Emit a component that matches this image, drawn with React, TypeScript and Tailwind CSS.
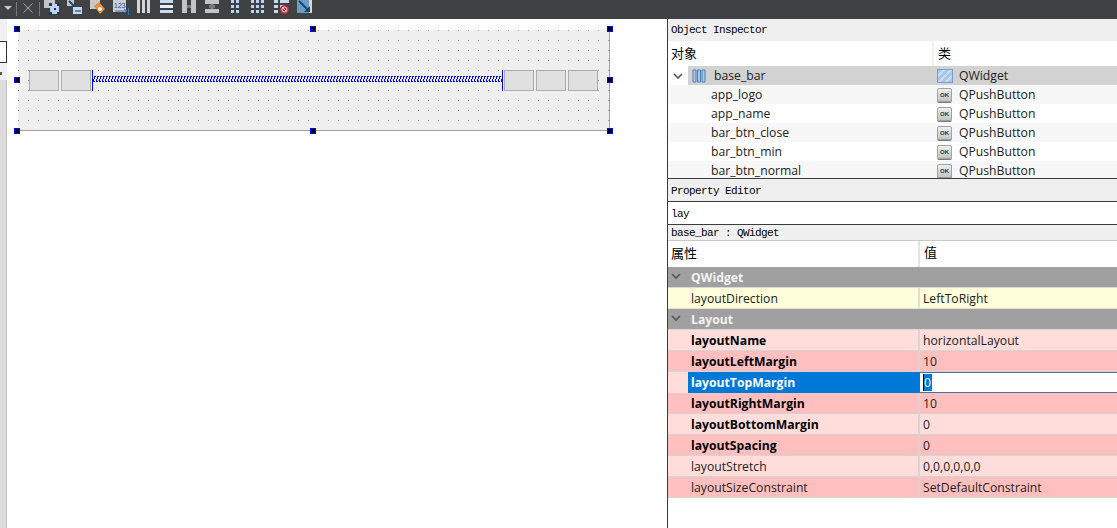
import type { ReactNode } from 'react';

const mono = "font-['Liberation_Mono','Noto_Sans_CJK_SC',monospace] text-[11px] tracking-[-0.6px]";

// toolbar glyphs, 16px box each, painted in designer's pale blue/white
const ToolIcon = ({ children }: { children: ReactNode }) => (
  <svg width="16" height="16" viewBox="0 0 16 16" className="shrink-0 blur-[0.4px]">
    {children}
  </svg>
);

const Toolbar = () => (
  <div className="flex h-[19px] items-center bg-[#404142] pl-[4px]">
    <svg width="8" height="4" viewBox="0 0 8 4" className="-mt-[3px]">
      <path d="M0 0h8L4 4z" fill="#c8c8c8" />
    </svg>
    <div className="ml-[4px] -mt-[2px] h-[14px] w-px bg-[#77787a]" />
    <svg width="10" height="10" viewBox="0 0 10 10" className="ml-[6px] -mt-[3px]">
      <path d="M0.500 0.500l9 9M9.500 0.500l-9 9" stroke="#a8a9aa" strokeWidth="1" />
    </svg>
    <div className="ml-[6px] -mt-[2px] h-[14px] w-px bg-[#77787a]" />
    <div className="ml-[4px] flex items-start gap-[7px] self-start">
      <ToolIcon>
        <rect x="0" y="0" width="11" height="8" fill="#c4c4c4" />
        <rect x="6" y="4" width="9" height="10" fill="#b9d3f0" />
        <path d="M5 3h3v3H5zM13 3h3v3h-3zM5 12h3v3H5zM13 12h3v3h-3z" fill="#22395c" />
        <rect x="10" y="8" width="2" height="2" fill="#24364f" />
      </ToolIcon>
      <ToolIcon>
        <rect x="0" y="0" width="7" height="6" fill="#c8c8c8" />
        <path d="M2 1l7 7" stroke="#17496e" strokeWidth="2" />
        <rect x="6" y="7" width="9" height="7" fill="#c2d8ee" />
        <path d="M8 11h6" stroke="#44678c" strokeWidth="1.500" />
      </ToolIcon>
      <ToolIcon>
        <rect x="0" y="0" width="10" height="9" fill="#c8c8c8" />
        <path d="M4 6l5-4 6 7-5 5z" fill="#ee8a3c" />
        <circle cx="10" cy="9" r="2" fill="#fff" />
      </ToolIcon>
      <ToolIcon>
        <rect x="0" y="0" width="13" height="12" fill="#c9cfd8" />
        <text x="1" y="8" fontSize="7" fill="#2c4f86" fontFamily="Liberation Sans">123</text>
        <path d="M2 11h11M11 9l3 2-3 2" stroke="#3873b8" fill="none" />
        <path d="M15.500 8v7" stroke="#3873b8" />
      </ToolIcon>
      <ToolIcon>
        <rect x="1" y="0" width="3" height="13" fill="#d6d6d6" />
        <rect x="6" y="0" width="3" height="13" fill="#d6d6d6" />
        <rect x="11" y="0" width="3" height="13" fill="#d6d6d6" />
      </ToolIcon>
      <ToolIcon>
        <rect x="1" y="0" width="13" height="3" fill="#c6dbf0" />
        <rect x="1" y="5" width="13" height="3" fill="#e4eef8" />
        <rect x="1" y="10" width="13" height="3" fill="#c6dbf0" />
      </ToolIcon>
      <ToolIcon>
        <rect x="0" y="0" width="5" height="13" fill="#c4c4c4" />
        <rect x="9" y="0" width="5" height="13" fill="#c4c4c4" />
        <path d="M5 6.500h4" stroke="#7a7a7a" strokeWidth="3" />
      </ToolIcon>
      <ToolIcon>
        <rect x="0" y="0" width="14" height="4" fill="#c4c4c4" />
        <rect x="0" y="9" width="14" height="4" fill="#c4c4c4" />
        <path d="M7 4v5M4 6.500h6" stroke="#7a7a7a" strokeWidth="3" />
      </ToolIcon>
      <ToolIcon>
        <path d="M3 0h3v3H3zM8 0h3v3H8zM3 5h3v3H3zM8 5h3v3H8zM3 10h3v3H3zM8 10h3v3H8z" fill="#b9d3f0" />
      </ToolIcon>
      <ToolIcon>
        <path d="M0 0h3v3H0zM5 0h3v3H5zM10 0h3v3h-3zM0 5h3v3H0zM5 5h3v3H5zM10 5h3v3h-3zM0 10h3v3H0zM5 10h3v3H5zM10 10h3v3h-3z" fill="#b9d3f0" />
      </ToolIcon>
      <ToolIcon>
        <path d="M0 0h4v3H0zM6 0h9v3H6zM0 5h4v3H0zM6 5h4v3H6zM0 10h4v3H0z" fill="#c6dbf0" />
        <circle cx="10.500" cy="9.500" r="4.500" fill="#b5333a" />
        <circle cx="10.500" cy="9.500" r="2.500" fill="none" stroke="#eec8c8" />
        <path d="M8.500 7.500l4 4" stroke="#eec8c8" />
      </ToolIcon>
      <ToolIcon>
        <rect x="0" y="0" width="15" height="13" fill="#6f9cc6" />
        <rect x="12" y="0" width="3" height="13" fill="#d8d8d8" />
        <path d="M2 1l9 9" stroke="#10486f" strokeWidth="2" />
        <path d="M7 12h6V6z" fill="#10486f" />
      </ToolIcon>
    </div>
  </div>
);

const Handle = ({ className }: { className: string }) => (
  <div className={`absolute h-[6px] w-[6px] border border-[#0000ff] bg-black ${className}`} />
);

const Slot = () => <div className="h-[21px] w-[30px] border border-[#adadad] bg-[#e0e0e0]" />;

const Spring = () => (
  <div className="flex h-[21px] min-w-0 flex-1 items-center border-x border-[#0000ff]">
    <svg className="-mt-[2px] h-[6px] w-full" shapeRendering="crispEdges">
      <defs>
        <pattern id="spring" width="3" height="6" patternUnits="userSpaceOnUse">
          <path d="M1 0h2v1h-1v2h-1zM0 3h1v2h1v1h-2z" fill="#0000ff" />
        </pattern>
      </defs>
      <rect width="100%" height="100%" fill="url(#spring)" />
    </svg>
  </div>
);

const FormCanvas = () => (
  <div className="min-w-0 flex-1 bg-white pl-[11px] pt-[11px]">
    <div className="relative flex h-[101px] w-[592px] items-center border-b border-r border-[#a0a0a0] bg-[#efefef] bg-[conic-gradient(at_1px_1px,transparent_75%,#9a9a9a_0)] bg-[size:10px_10px] px-[11px]">
      <div className="mr-px flex gap-[2px]">
        <Slot />
        <Slot />
      </div>
      <Spring />
      <div className="ml-px flex gap-[2px]">
        <Slot />
        <Slot />
        <Slot />
      </div>
      <Handle className="left-[-4px] top-[-4px]" />
      <Handle className="left-[292px] top-[-4px]" />
      <Handle className="right-[-4px] top-[-4px]" />
      <Handle className="left-[-4px] top-[47px]" />
      <Handle className="right-[-4px] top-[47px]" />
      <Handle className="bottom-[-4px] left-[-4px]" />
      <Handle className="bottom-[-4px] left-[292px]" />
      <Handle className="bottom-[-4px] right-[-4px]" />
    </div>
  </div>
);

const Chevron = ({ color, className }: { color: string; className?: string }) => (
  <svg width="10" height="6" viewBox="0 0 10 6" className={className}>
    <path d="M1 1l4 4 4-4" fill="none" stroke={color} strokeWidth="1.600" />
  </svg>
);

const OkIcon = () => (
  <div className="flex h-[14px] w-[15px] shrink-0 items-center justify-center rounded-[2px] border border-[#a0a0a0] bg-gradient-to-b from-[#f0f0f0] to-[#c4c4c4] font-['Liberation_Sans',sans-serif] text-[6px] font-bold leading-none text-[#333] shadow-[0_1px_0_#7a7a7a]">
    OK
  </div>
);

const objects = ['app_logo', 'app_name', 'bar_btn_close', 'bar_btn_min', 'bar_btn_normal'];

const ObjectInspector = () => (
  <div className="h-[160px] shrink-0 overflow-hidden border-b border-[#3c3c3c]">
    <div className={`flex h-[22px] items-center bg-[#efefef] pl-[3px] text-black ${mono}`}>Object Inspector</div>
    <div className="flex h-[25px] items-center bg-white text-[13px] text-black">
      <div className="w-[266px] border-r-2 border-[#f0f0f0] pl-[3px] leading-[25px]">对象</div>
      <div className="pl-[4px] leading-[25px]">类</div>
    </div>
    <div className="flex h-[19px] items-center">
      <div className="w-[20px] pl-[5px]">
        <Chevron color="#555" />
      </div>
      <div className="flex h-full w-[246px] items-center bg-[#d2d2d2] pl-[4px]">
        <svg width="14" height="14" viewBox="0 0 14 14">
          <path d="M1 1h3v12H1zM5.500 1h3v12h-3zM10 1h3v12h-3z" fill="#a9c8e8" stroke="#4a7fb8" strokeWidth="1" />
        </svg>
        <span className="ml-[8px] mt-[2px]">base_bar</span>
      </div>
      <div className="flex h-full flex-1 items-center bg-[#d2d2d2] pl-[3px]">
        <div className="h-[14px] w-[16px] border border-[#6d9fd4] bg-[repeating-linear-gradient(135deg,#a9c8e8_0,#a9c8e8_3px,#c9dcf0_3px,#c9dcf0_5px)]" />
        <span className="ml-[6px] mt-[2px]">QWidget</span>
      </div>
    </div>
    {objects.map((name, i) => (
      <div key={name} className={`flex h-[19px] items-center ${i % 2 === 0 ? 'bg-[#f7f7f7]' : 'bg-white'}`}>
        <div className="mt-[2px] w-[266px] pl-[43px]">{name}</div>
        <div className="flex items-center pl-[3px]">
          <OkIcon />
          <span className="ml-[7px] mt-[2px]">QPushButton</span>
        </div>
      </div>
    ))}
  </div>
);

interface PropRow {
  name: string;
  value: string;
  bold?: boolean;
}

const layoutProps: PropRow[] = [
  { name: 'layoutName', value: 'horizontalLayout', bold: true },
  { name: 'layoutLeftMargin', value: '10', bold: true },
  { name: 'layoutTopMargin', value: '0', bold: true },
  { name: 'layoutRightMargin', value: '10', bold: true },
  { name: 'layoutBottomMargin', value: '0', bold: true },
  { name: 'layoutSpacing', value: '0', bold: true },
  { name: 'layoutStretch', value: '0,0,0,0,0,0' },
  { name: 'layoutSizeConstraint', value: 'SetDefaultConstraint' },
];

const GroupRow = ({ label }: { label: string }) => (
  <div className="flex h-[21px] items-center border-b border-[#d8d8d8] bg-[#a0a0a0] font-bold text-[#f2f2f2]">
    <div className="w-[23px] pl-[3px]">
      <Chevron color="#555" className="-mt-[3px]" />
    </div>
    <span className="mt-[2px]">{label}</span>
  </div>
);

const PropertyRow = ({ row, index }: { row: PropRow; index: number }) => {
  const bg = index % 2 === 0 ? 'bg-[#ffdddb]' : 'bg-[#ffbfbe]';
  if (row.name === 'layoutTopMargin') {
    return (
      <div className={`flex h-[21px] items-stretch ${bg}`}>
        <div className="w-[20px]" />
        <div className="flex w-[232px] items-center bg-[#0078d7] pl-[3px] pt-[2px] font-bold text-white">{row.name}</div>
        <div className="flex flex-1 items-center border-y border-[#3b72a8] bg-white pl-[3px]">
          <span className="border-l border-black bg-[#0078d7] pr-px leading-[17px] text-white">0</span>
        </div>
      </div>
    );
  }
  return (
    <div className={`flex h-[21px] items-center border-b border-[#dcd2d2] ${bg}`}>
      <div className={`w-[252px] border-r-2 border-[#dcd2d2] pl-[23px] pt-[2px] leading-[18px] ${row.bold ? 'font-bold text-black' : ''}`}>
        {row.name}
      </div>
      <div className="mt-[2px] pl-[3px]">{row.value}</div>
    </div>
  );
};

const PropertyEditor = () => (
  <div className="flex-1">
    <div className={`flex h-[23px] items-center border-b border-[#3c3c3c] bg-[#efefef] pl-[3px] pt-[2px] text-black ${mono}`}>Property Editor</div>
    <div className={`flex h-[23px] items-center border-b border-[#3c3c3c] bg-white pl-[3px] pt-[2px] text-black ${mono}`}>lay</div>
    <div className={`flex h-[16px] items-center border-b border-[#c8c8c8] bg-[#f0f0f0] pl-[3px] pt-[2px] text-black ${mono}`}>base_bar : QWidget</div>
    <div className="flex h-[26px] items-center bg-white text-[13px] text-black">
      <div className="w-[252px] border-r-2 border-[#e4e4e4] pb-[2px] pl-[3px] leading-[24px]">属性</div>
      <div className="pb-[2px] pl-[4px]">值</div>
    </div>
    <GroupRow label="QWidget" />
    <div className="flex h-[21px] items-center border-b border-[#e0e0d0] bg-[#ffffdc]">
      <div className="w-[252px] border-r-2 border-[#e0e0d0] pl-[23px] pt-[2px] leading-[18px]">layoutDirection</div>
      <div className="mt-[2px] pl-[3px]">LeftToRight</div>
    </div>
    <GroupRow label="Layout" />
    {layoutProps.map((row, i) => (
      <PropertyRow key={row.name} row={row} index={i} />
    ))}
  </div>
);

export default function App() {
  return (
    <div className="flex h-[528px] w-[1117px] flex-col overflow-hidden bg-white font-['Open_Sans','Noto_Sans_CJK_SC',sans-serif] text-[12.2px] text-[#222]">
      <Toolbar />
      <div className="flex min-h-0 flex-1">
        <div className="flex w-[7px] shrink-0 flex-col bg-[#f0f0f0]">
          <div className="mt-[22px] h-[22px] border-y border-r border-[#333] bg-white" />
          <div className="mt-[9px] h-[3px] w-[2px] bg-[#555]" />
          <div className="mt-[5px] flex-1 border-r border-[#c0c0c0] bg-[#dcdcdc]" />
        </div>
        <FormCanvas />
        <div className="flex w-[450px] shrink-0 flex-col border-l border-[#3c3c3c]">
          <ObjectInspector />
          <PropertyEditor />
        </div>
      </div>
    </div>
  );
}
